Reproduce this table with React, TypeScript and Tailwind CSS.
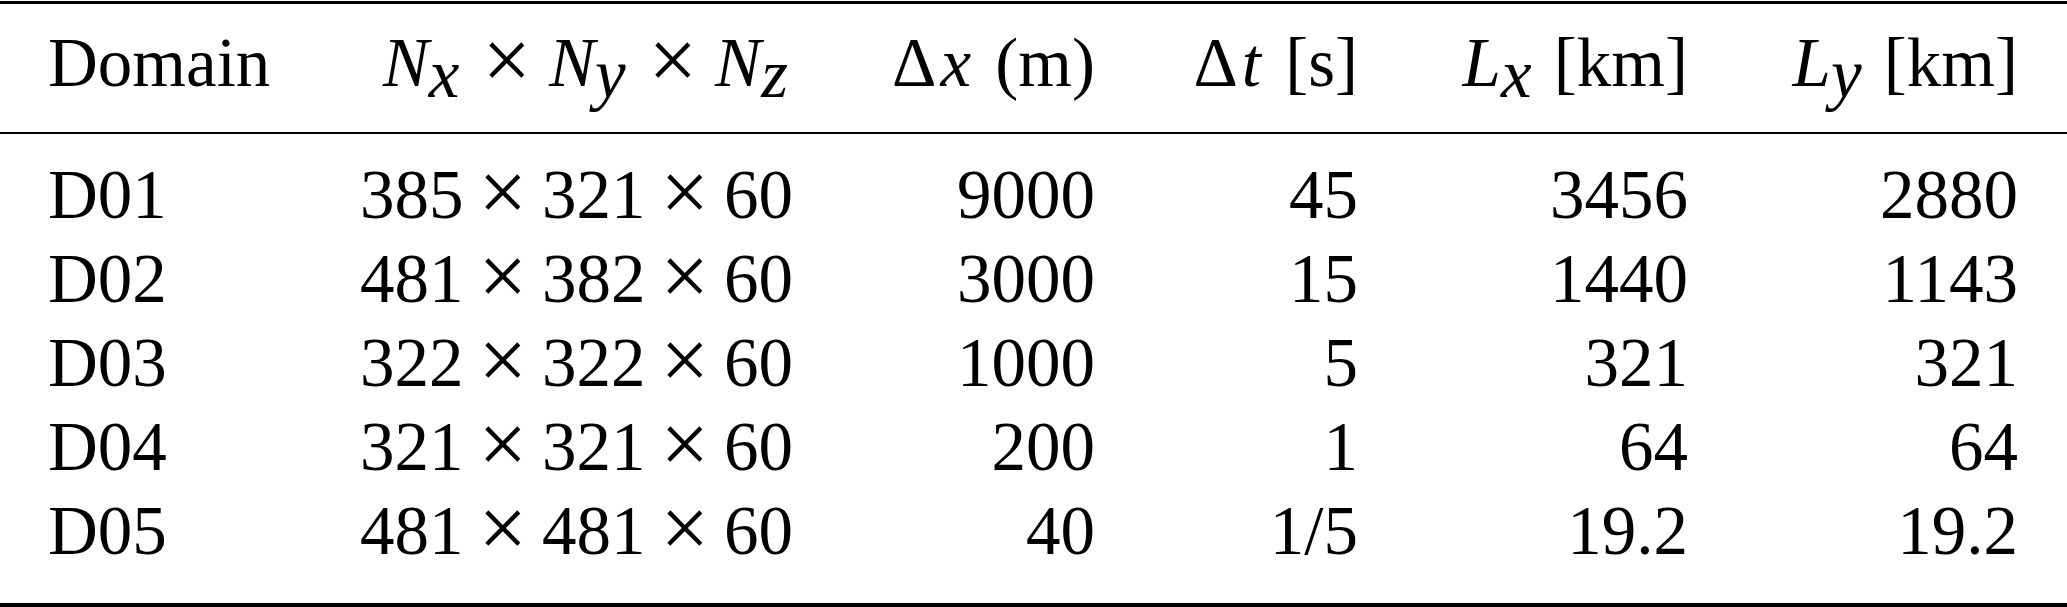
const rows = [
  { domain: "D01", grid: ["385", "321", "60"], dx: "9000", dt: "45", lx: "3456", ly: "2880" },
  { domain: "D02", grid: ["481", "382", "60"], dx: "3000", dt: "15", lx: "1440", ly: "1143" },
  { domain: "D03", grid: ["322", "322", "60"], dx: "1000", dt: "5", lx: "321", ly: "321" },
  { domain: "D04", grid: ["321", "321", "60"], dx: "200", dt: "1", lx: "64", ly: "64" },
  { domain: "D05", grid: ["481", "481", "60"], dx: "40", dt: "1/5", lx: "19.2", ly: "19.2" },
];

const cols = "grid grid-cols-[252px_493px_302px_263px_330px_330px] pl-[48px]";

// subscript, nearly full size as in the source table, plus TeX's scriptspace
const Sub = ({ children }: { children: string }) => (
  <span className="italic pr-[5px] align-[-11px] leading-[50px]">{children}</span>
);

// math-size multiplication sign, bigger than the text one
const Times = ({ wide }: { wide?: boolean }) => (
  <span
    className={`${wide ? "mx-[18px]" : "mx-[15px]"} text-[86px] align-[-3px] leading-[50px]`}
  >
    ×
  </span>
);

const Var = ({ children }: { children: string }) => (
  <i className="pl-[4px] pr-[7px]">{children}</i>
);

const App = () => {
  return (
    <div className="w-[2067px] h-[607px] bg-white pt-px font-['Liberation_Serif','Times_New_Roman',serif] text-[69px] leading-[84px] text-black">
      <div className="border-t-[3px] border-black" />
      <div className={`${cols} pt-[17px] pb-[27px] whitespace-nowrap`}>
        <div>Domain</div>
        <div className="text-right">
          <i>N</i>
          <Sub>x</Sub>
          <Times wide />
          <i>N</i>
          <Sub>y</Sub>
          <Times wide />
          <i>N</i>
          <Sub>z</Sub>
        </div>
        <div className="text-right">
          Δ<Var>x</Var> (m)
        </div>
        <div className="text-right">
          Δ<Var>t</Var> [s]
        </div>
        <div className="text-right">
          <i>L</i>
          <Sub>x</Sub> [km]
        </div>
        <div className="text-right">
          <i>L</i>
          <Sub>y</Sub> [km]
        </div>
      </div>
      <div className="border-t-2 border-black" />
      <div className={`${cols} pt-[19px] pb-[30px] whitespace-nowrap`}>
        {rows.map((r) => (
          <div key={r.domain} className="contents">
            <div>{r.domain}</div>
            <div className="text-right">
              {r.grid[0]}
              <Times />
              {r.grid[1]}
              <Times />
              {r.grid[2]}
            </div>
            <div className="text-right">{r.dx}</div>
            <div className="text-right">{r.dt}</div>
            <div className="text-right">{r.lx}</div>
            <div className="text-right">{r.ly}</div>
          </div>
        ))}
      </div>
      <div className="border-t-4 border-black" />
    </div>
  );
};

export default App;
